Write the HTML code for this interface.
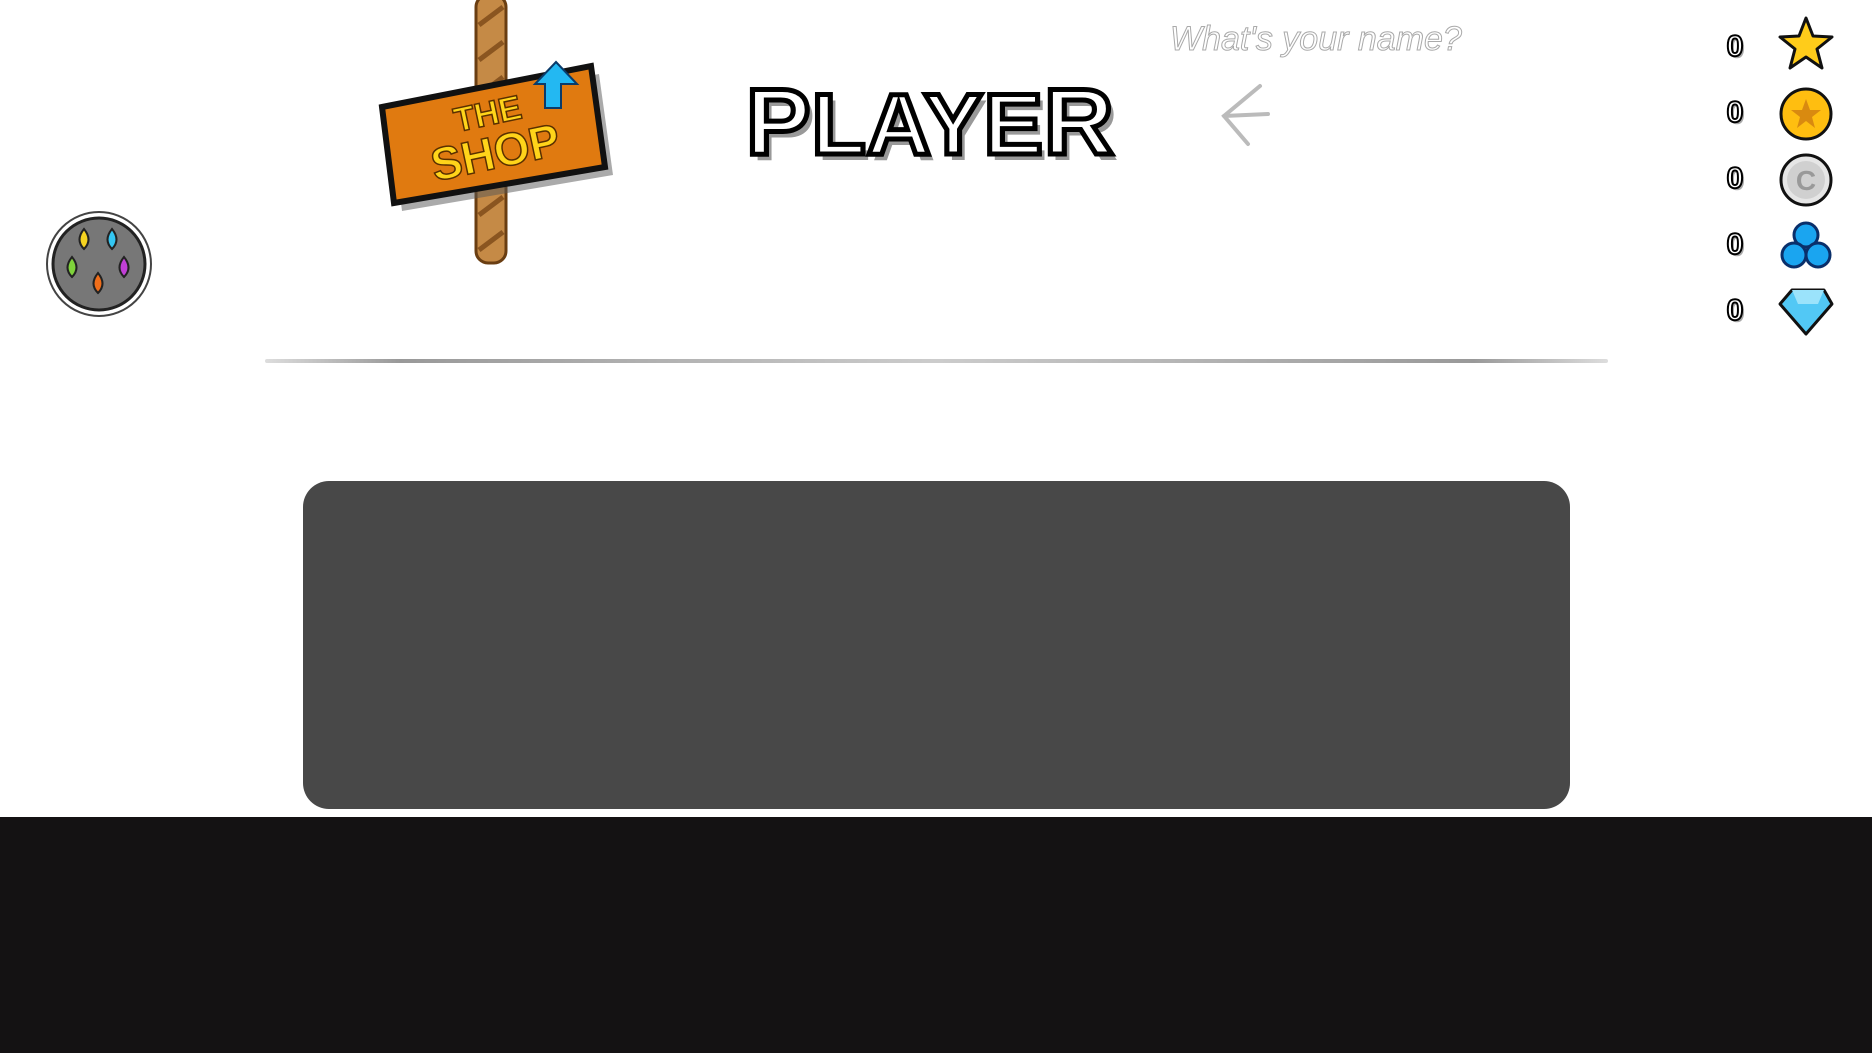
<!DOCTYPE html>
<html><head><meta charset="utf-8"><style>
html,body{margin:0;padding:0;width:1872px;height:1053px;overflow:hidden;background:#fff;font-family:"Liberation Sans",sans-serif;position:relative}
.abs{position:absolute}
.num{position:absolute;left:1720px;width:30px;text-align:center;font:bold 30px "Liberation Sans",sans-serif;color:#fff;-webkit-text-stroke:2px #000;text-shadow:2px 2px 0 #aaa}
</style></head><body>
<div class="abs" style="left:0;top:817px;width:1872px;height:236px;background:#141213"></div>
<div class="abs" style="left:303px;top:481px;width:1267px;height:328px;background:#484848;border-radius:26px"></div>
<div class="abs" style="left:265px;top:359px;width:1343px;height:4px;background:linear-gradient(90deg,#ddd,#999 10%,#ccc 50%,#999 90%,#ddd);border-radius:2px"></div>

<svg class="abs" style="left:44px;top:209px" width="110" height="110" viewBox="0 0 110 110">
<circle cx="55" cy="55" r="52" fill="#fff" stroke="#444" stroke-width="2"/>
<circle cx="55" cy="55" r="46" fill="#777" stroke="#222" stroke-width="3"/>
<path d="M40 20 q9 11 0 20 q-9-9 0-20z" fill="#f5d320" stroke="#222" stroke-width="2"/>
<path d="M68 20 q9 11 0 20 q-9-9 0-20z" fill="#33c6f2" stroke="#222" stroke-width="2"/>
<path d="M28 48 q9 11 0 20 q-9-9 0-20z" fill="#7fd33b" stroke="#222" stroke-width="2"/>
<path d="M80 48 q9 11 0 20 q-9-9 0-20z" fill="#c13fd6" stroke="#222" stroke-width="2"/>
<path d="M54 64 q9 11 0 20 q-9-9 0-20z" fill="#f06e1a" stroke="#222" stroke-width="2"/>
</svg>

<svg class="abs" style="left:370px;top:0" width="260" height="280" viewBox="370 0 260 280">
<rect x="476" y="-5" width="30" height="268" rx="12" fill="#c58a46" stroke="#6a3e12" stroke-width="3"/>
<path d="M479 25 l24 -18 M479 60 l24 -18 M479 95 l24 -18 M479 215 l24 -18 M479 250 l24 -18" stroke="#8a5520" stroke-width="5"/>
<polygon points="382,107 591,66 605,167 394,203" fill="#555" opacity=".5" transform="translate(8,8)"/>
<polygon points="382,107 591,66 605,167 394,203" fill="#e07a10" stroke="#111" stroke-width="6"/>
<text x="490" y="125" text-anchor="middle" transform="rotate(-12 490 125)" font-family="Liberation Sans" font-weight="bold" font-size="34" fill="#ffd41a" stroke="#5a3000" stroke-width="1.5">THE</text>
<text x="497" y="168" text-anchor="middle" transform="rotate(-12 497 160)" font-family="Liberation Sans" font-weight="bold" font-size="46" fill="#ffd41a" stroke="#5a3000" stroke-width="1.5">SHOP</text>
<polygon points="545,108 561,108 561,84 577,84 556,62 535,84 545,84" fill="#23b8f2" stroke="#0a3b6a" stroke-width="2"/>
</svg>

<div class="abs" style="left:746px;top:70px;font:bold 94px 'Liberation Sans',sans-serif;color:#fff;-webkit-text-stroke:5px #000;text-shadow:5px 6px 0 #999;line-height:104px;transform-origin:0 0;transform:scaleX(1.03);letter-spacing:1px">P<span style="font-size:86px">LAYE</span>R</div>

<div class="abs" style="left:1170px;top:20px;font:34px 'Liberation Sans',sans-serif;font-style:italic;color:#fff;-webkit-text-stroke:1px #aaa">What's your name?</div>
<svg class="abs" style="left:1210px;top:80px" width="70" height="70"><path d="M50 6 L14 36 L38 64 M14 36 L58 34" fill="none" stroke="#bbb" stroke-width="4" stroke-linecap="round"/></svg>

<div class="num" style="top:30px">0</div>
<div class="num" style="top:96px">0</div>
<div class="num" style="top:162px">0</div>
<div class="num" style="top:228px">0</div>
<div class="num" style="top:294px">0</div>

<svg class="abs" style="left:1778px;top:16px" width="56" height="56" viewBox="0 0 56 56"><polygon points="28,2 35,20 54,21 39,33 44,52 28,41 12,52 17,33 2,21 21,20" fill="#ffcc1a" stroke="#111" stroke-width="3" stroke-linejoin="round"/></svg>
<svg class="abs" style="left:1778px;top:86px" width="56" height="56"><circle cx="28" cy="28" r="25" fill="#ffbe10" stroke="#111" stroke-width="3"/><polygon points="28,13 32,24 43,24 34,31 37,42 28,35 19,42 22,31 13,24 24,24" fill="#d98a10"/></svg>
<svg class="abs" style="left:1778px;top:152px" width="56" height="56"><circle cx="28" cy="28" r="25" fill="#e6e6e6" stroke="#111" stroke-width="3"/><circle cx="28" cy="28" r="19" fill="#d0d0d0"/><text x="28" y="38" text-anchor="middle" font-family="Liberation Sans" font-weight="bold" font-size="28" fill="#999">C</text></svg>
<svg class="abs" style="left:1778px;top:218px" width="56" height="56"><circle cx="28" cy="17" r="12" fill="#1aa5f0" stroke="#0a2f6a" stroke-width="3"/><circle cx="16" cy="37" r="12" fill="#1aa5f0" stroke="#0a2f6a" stroke-width="3"/><circle cx="40" cy="37" r="12" fill="#1aa5f0" stroke="#0a2f6a" stroke-width="3"/></svg>
<svg class="abs" style="left:1778px;top:284px" width="56" height="56"><polygon points="14,6 46,6 54,20 28,50 2,20" fill="#52c8f5" stroke="#111" stroke-width="3" stroke-linejoin="round"/><polygon points="14,6 46,6 40,20 20,20" fill="#9be3fb"/></svg>
</body></html>
